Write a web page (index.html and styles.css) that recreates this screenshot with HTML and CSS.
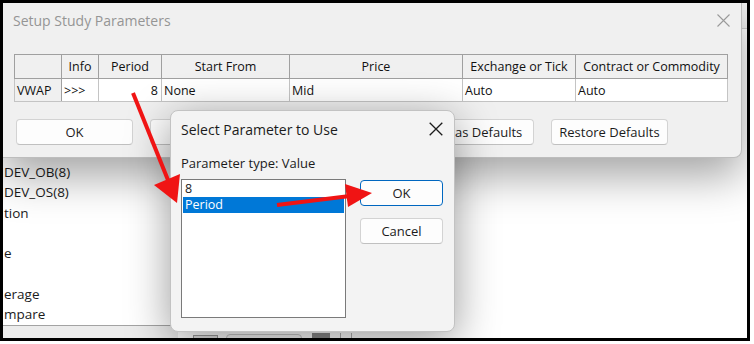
FILE: index.html
```html
<!DOCTYPE html>
<html lang="en">
<head>
  <meta charset="UTF-8">
  <meta name="viewport" content="width=device-width, initial-scale=1.0">
  <title>Setup Study Parameters</title>
  <link rel="stylesheet" href="styles.css">
</head>
<body>
  <div class="frame">
    <!-- chart window behind the dialogs -->
    <div class="app">
      <div class="app-top"></div>
      <ul class="studies">
        <li>DEV_OB(8)</li>
        <li>DEV_OS(8)</li>
        <li>tion</li>
        <li></li>
        <li>e</li>
        <li></li>
        <li>erage</li>
        <li>mpare</li>
      </ul>
      <div class="statusbar">
        <div class="status-left"></div>
        <span class="sb-box"></span>
        <span class="sb-btn"></span>
        <span class="sb-dark"></span>
        <span class="sb-line"></span>
        <span class="sb-line"></span>
      </div>
    </div>

    <div class="dlg dlg-main">
      <div class="dlg-title">
        <span>Setup Study Parameters</span>
        <svg class="close" width="13" height="13" viewBox="0 0 13 13">
          <path d="M0.5 0.5 L12.5 12.5 M12.5 0.5 L0.5 12.5" stroke="#9a9a9a" stroke-width="1.1" fill="none"/>
        </svg>
      </div>
      <table class="params">
        <colgroup>
          <col class="c-name"><col class="c-info"><col class="c-period"><col class="c-start">
          <col class="c-price"><col class="c-exch"><col class="c-contract">
        </colgroup>
        <tr>
          <th></th><th>Info</th><th>Period</th><th>Start From</th><th>Price</th>
          <th>Exchange or Tick</th><th>Contract or Commodity</th>
        </tr>
        <tr>
          <td class="row-head">VWAP</td><td>&gt;&gt;&gt;</td><td class="num">8</td><td>None</td>
          <td>Mid</td><td>Auto</td><td>Auto</td>
        </tr>
      </table>
      <!-- the middle buttons sit under the small dialog -->
      <div class="dlg-buttons">
        <button class="btn">OK</button>
        <button class="btn"></button>
        <button class="btn"></button>
        <button class="btn btn-save">Save as Defaults</button>
        <button class="btn">Restore Defaults</button>
      </div>
    </div>

    <div class="dlg dlg-param">
      <div class="param-head">
        <span>Select Parameter to Use</span>
        <svg class="close" width="14" height="14" viewBox="0 0 14 14">
          <path d="M0.7 0.7 L13.3 13.3 M13.3 0.7 L0.7 13.3" stroke="#1b1b1b" stroke-width="1.3" fill="none"/>
        </svg>
      </div>
      <p class="param-type">Parameter type: Value</p>
      <div class="param-body">
        <ul class="listbox">
          <li>8</li>
          <li class="selected">Period</li>
        </ul>
        <div class="param-buttons">
          <button class="btn btn-default">OK</button>
          <button class="btn">Cancel</button>
        </div>
      </div>
    </div>

    <svg class="arrows" width="744" height="335" viewBox="0 0 744 335">
      <line x1="130" y1="90" x2="167" y2="182" stroke="#f01414" stroke-width="4"/>
      <polygon points="174,200 151,182 177,171" fill="#f01414"/>
      <line x1="274" y1="202" x2="347" y2="193" stroke="#f01414" stroke-width="4"/>
      <polygon points="369,190 342,181 345,204" fill="#f01414"/>
    </svg>
  </div>
</body>
</html>
```

FILE: styles.css
```css
* {
  box-sizing: border-box;
  margin: 0;
  padding: 0;
}
body {
  font-family: "Open Sans", Arial, sans-serif;
  background-color: #fff;
  color: #1b1b1b;
}
.frame {
  position: relative;
  width: 750px;
  height: 341px;
  border: 3px solid #000;
  overflow: hidden;
  background: #fff;
}

/* background chart window */
.app {
  display: flex;
  flex-direction: column;
  height: 100%;
}
.app-top {
  height: 26px;
  background: #f0f0f0;
  border-bottom: 1px solid #cfcfcf;
  flex: none;
}
.studies {
  list-style: none;
  flex: 1;
  overflow: hidden;
  padding-top: 133px;
  width: 167px;
  font-size: 13.5px;
  line-height: 20.3px;
  padding-left: 1px;
  color: #1b1b1b;
}
.studies li {
  height: 20.3px;
}
.statusbar {
  flex: none;
  height: 13px;
  display: flex;
  align-items: flex-start;
}
.status-left {
  width: 175px;
  height: 13px;
  background: #ececec;
  border-top: 1px solid #a3a3a3;
}
.sb-box {
  margin: 10px 0 0 15px;
  width: 25px;
  height: 6px;
  border: 1px solid #9c9c9c;
  background: #e4e4e4;
}
.sb-btn {
  margin: 9px 0 0 8px;
  width: 76px;
  height: 8px;
  border: 1px solid #c8c8c8;
  border-radius: 4px 4px 0 0;
  background: #f7f7f7;
}
.sb-dark {
  margin: 8px 0 0 10px;
  width: 18px;
  height: 8px;
  background: #8a8a8a;
}
.sb-line {
  margin: 8px 0 0 10px;
  width: 1px;
  height: 8px;
  background: #b0b0b0;
}

/* dialogs */
.dlg {
  position: absolute;
  background: #f0f0f0;
}
.dlg-main {
  left: 0;
  top: 0;
  width: 739px;
  height: 155px;
  border-right: 1px solid #bdbdbd;
  border-bottom: 1px solid #bdbdbd;
  border-radius: 0 0 8px 0;
  box-shadow: 0 18px 44px rgba(0, 0, 0, 0.36);
}
.dlg-title {
  display: flex;
  align-items: center;
  justify-content: space-between;
  height: 34px;
  padding: 0 11px 0 10px;
  font-size: 14px;
  color: #959595;
}
.params {
  margin: 17px 0 0 11px;
  width: 713px;
  table-layout: fixed;
  border-collapse: collapse;
  border: 1px solid #8c8c8c;
  font-size: 12.5px;
  color: #111;
}
.c-name { width: 47px; }
.c-info { width: 37px; }
.c-period { width: 63px; }
.c-start { width: 128px; }
.c-price { width: 173px; }
.c-exch { width: 113px; }
.c-contract { width: 152px; }
.params th {
  height: 24px;
  font-weight: normal;
  background: #f0f0f0;
  border: 1px solid #a0a0a0;
  white-space: nowrap;
}
.params td {
  height: 23px;
  padding: 0 2px;
  background: #fff;
  border: 1px solid #c4c4c4;
  white-space: nowrap;
}
.params td.row-head {
  background: #f0f0f0;
  border-right-color: #a0a0a0;
}
.params td.num {
  text-align: right;
  padding-right: 3px;
}
.dlg-buttons {
  display: flex;
  gap: 16.75px;
  margin: 17px 0 0 13px;
}
.btn {
  width: 117px;
  height: 26px;
  background: #fdfdfd;
  border: 1px solid #d3d3d3;
  border-bottom-color: #c0c0c0;
  border-radius: 4px;
  font-family: "Open Sans", Arial, sans-serif;
  font-size: 13px;
  color: #1b1b1b;
}
.btn-save {
  text-align: right;
  padding-right: 11px;
}

.dlg-param {
  left: 167px;
  top: 107px;
  width: 285px;
  height: 222px;
  padding: 0 11px 0 10px;
  background: #f3f3f3;
  border: 1px solid #c2c2c2;
  border-radius: 8px;
  box-shadow: 0 10px 44px rgba(0, 0, 0, 0.4);
}
.param-head {
  display: flex;
  align-items: center;
  justify-content: space-between;
  height: 36px;
  font-size: 14px;
}
.param-type {
  margin-top: 7px;
  font-size: 13px;
  line-height: 18px;
}
.param-body {
  display: flex;
  gap: 14px;
  margin-top: 7px;
}
.listbox {
  list-style: none;
  width: 165px;
  height: 139px;
  padding: 1px;
  background: #fff;
  border: 1px solid #7a7a7a;
  font-size: 12.5px;
  line-height: 16px;
}
.listbox li {
  height: 16px;
  padding-left: 2px;
}
.listbox li.selected {
  background: #0078d7;
  color: #fff;
}
.param-buttons {
  display: flex;
  flex-direction: column;
  gap: 12px;
  margin-top: 1px;
}
.param-buttons .btn {
  width: 83px;
}
.btn-default {
  border-color: #0067c0;
}

.arrows {
  position: absolute;
  left: 0;
  top: 0;
  pointer-events: none;
}
```
